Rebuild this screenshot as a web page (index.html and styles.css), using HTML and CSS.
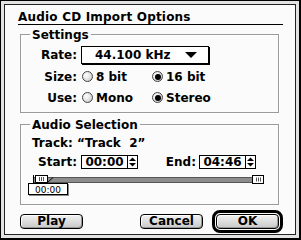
FILE: index.html
```html
<!DOCTYPE html>
<html lang="en">
<head>
    <meta charset="UTF-8">
    <title>Audio CD Import Options</title>
    <link rel="stylesheet" href="styles.css">
</head>
<body>
    <div class="window">
        <div class="panel">
            <h1 class="title">Audio CD Import Options</h1>

            <div class="group settings">
                <div class="group-title">Settings</div>
                <div class="form">
                    <span class="label">Rate:</span>
                    <div class="popup">
                        <span>44.100 kHz</span>
                        <span class="arrow"></span>
                    </div>

                    <span class="label">Size:</span>
                    <div class="options">
                        <span class="radio"><span class="dot"></span>8 bit</span>
                        <span class="radio on"><span class="dot"></span>16 bit</span>
                    </div>

                    <span class="label">Use:</span>
                    <div class="options">
                        <span class="radio"><span class="dot"></span>Mono</span>
                        <span class="radio on"><span class="dot"></span>Stereo</span>
                    </div>
                </div>
            </div>

            <div class="group selection">
                <div class="group-title">Audio Selection</div>
                <div class="track">Track: “Track&nbsp; 2”</div>
                <div class="times">
                    <span class="label start-label">Start:</span>
                    <span class="field">00:00</span>
                    <span class="stepper">
                        <svg width="9" height="12" viewBox="0 0 9 12">
                            <path d="M1 5 L4.5 1.5 L8 5 Z" fill="#000"/>
                            <path d="M1 7 L4.5 10.5 L8 7 Z" fill="#000"/>
                        </svg>
                    </span>
                    <span class="label end-label">End:</span>
                    <span class="field">04:46</span>
                    <span class="stepper">
                        <svg width="9" height="12" viewBox="0 0 9 12">
                            <path d="M1 5 L4.5 1.5 L8 5 Z" fill="#000"/>
                            <path d="M1 7 L4.5 10.5 L8 7 Z" fill="#000"/>
                        </svg>
                    </span>
                </div>
                <div class="slider">
                    <svg width="240" height="21" viewBox="0 0 240 21">
                        <rect x="6.5" y="2.5" width="225" height="5" fill="#8c8c8c" stroke="#555"/>
                        <line x1="6.5" y1="0" x2="6.5" y2="8" stroke="#000"/>
                        <path d="M20.5 7.5 L26 2.5" stroke="#000" fill="none"/>
                        <rect x="8.5" y="0.5" width="12" height="7" fill="#fff" stroke="#000"/>
                        <path d="M12.5 2 V6 M14.5 2 V6 M16.5 2 V6" stroke="#555"/>
                        <rect x="2" y="9" width="40" height="12" fill="#888"/>
                        <rect x="1.5" y="8.5" width="39" height="11" fill="#fff" stroke="#000"/>
                        <text x="21" y="17.5" text-anchor="middle" class="tip">00:00</text>
                        <rect x="225.5" y="0.5" width="11" height="8" fill="#fff" stroke="#000"/>
                        <path d="M229.5 2.5 V6.5 M231.5 2.5 V6.5 M233.5 2.5 V6.5" stroke="#555"/>
                    </svg>
                </div>
            </div>

            <div class="buttons">
                <button class="btn play">Play</button>
                <button class="btn cancel">Cancel</button>
                <span class="default-ring"><button class="btn">OK</button></span>
            </div>
        </div>
    </div>
</body>
</html>
```

FILE: styles.css
```css
body{
    margin: 0;
    font-family: "DejaVu Sans", sans-serif;
    font-weight: bold;
    font-size: 12px;
    color: #000;
}
.window{
    width: 301px;
    height: 240px;
    box-sizing: border-box;
    border: 1px solid #000;
    border-right-width: 2px;
    border-bottom-width: 2px;
    padding: 3px;
    background: #e2e2e2;
}
.panel{
    height: 100%;
    box-sizing: border-box;
    border: 1px solid #222;
    background: #fbfbfb;
}
.title{
    margin: 6px 0 0 13px;
    width: 265px;
    font-size: 12px;
    line-height: 13px;
    letter-spacing: 0.2px;
    border-bottom: 1px solid #000;
}

/* group boxes */
.group{
    margin-left: 15px;
    width: 257px;
    border: 1px solid #9a9a9a;
    box-shadow: 1px 1px 0 #fff, inset 1px 1px 0 #fff;
}
.settings{
    margin-top: 9px;
    padding-bottom: 4px;
}
.selection{
    margin-top: 11px;
    padding-bottom: 8px;
}
.group-title{
    width: fit-content;
    margin: -7px 0 0 9px;
    padding: 0 2px;
    line-height: 14px;
    background: #fbfbfb;
}
.form{
    display: grid;
    grid-template-columns: 56px 1fr;
    grid-template-rows: 22px 21px 21px;
    column-gap: 4px;
    align-items: center;
    margin-top: 2px;
}
.label{
    text-align: right;
}
.popup{
    height: 16px;
    border: 1px solid #000;
    box-shadow: 1px 1px 0 #000;
    background: #fff;
    display: flex;
    align-items: center;
    justify-content: space-between;
    padding: 0 11px 0 13px;
    box-sizing: content-box;
    width: 102px;
}
.arrow{
    width: 0;
    height: 0;
    border-left: 6px solid transparent;
    border-right: 6px solid transparent;
    border-top: 6px solid #000;
}
.options{
    display: grid;
    grid-template-columns: 70px auto;
    margin-left: 1px;
}
.radio{
    display: flex;
    align-items: center;
    gap: 3px;
}
.dot{
    width: 9px;
    height: 9px;
    border: 1px solid #444;
    border-radius: 50%;
    background: radial-gradient(circle at 35% 35%, #fff 0, #ddd 60%, #aaa 100%);
    display: flex;
    align-items: center;
    justify-content: center;
}
.on .dot::after{
    content: "";
    width: 6px;
    height: 6px;
    border-radius: 50%;
    background: #000;
}

/* audio selection */
.track{
    margin: 4px 0 0 11px;
    line-height: 14px;
}
.times{
    display: flex;
    align-items: center;
    margin-top: 5px;
    height: 14px;
}
.start-label{
    width: 56px;
    margin-right: 4px;
}
.end-label{
    width: 58px;
    margin-right: 3px;
}
.field{
    width: 45px;
    height: 12px;
    line-height: 12px;
    border: 1px solid #000;
    background: #fff;
    text-align: center;
}
.stepper{
    width: 9px;
    height: 12px;
    border: 1px solid #000;
    border-left: none;
    background: #fff;
    display: block;
}
.stepper svg{
    display: block;
}
.slider{
    margin: 6px 0 0 6px;
    height: 21px;
}
.slider svg{
    display: block;
}
.tip{
    font-family: "DejaVu Sans", sans-serif;
    font-weight: normal;
    font-size: 9px;
}

/* buttons */
.buttons{
    display: flex;
    align-items: center;
    height: 22px;
    margin-top: 5px;
}
.btn{
    width: 63px;
    height: 15px;
    padding: 0;
    font: inherit;
    line-height: 13px;
    border: 1px solid #000;
    border-radius: 4px;
    background: linear-gradient(#f2f2f2, #c8c8c8);
    box-shadow: inset 1px 1px 0 #fff, inset -1px -1px 0 #999;
    color: #000;
}
.play{
    margin-left: 15px;
}
.cancel{
    margin-left: 57px;
}
.default-ring{
    margin-left: 9px;
    padding: 1px;
    border: 3px solid #000;
    border-radius: 8px;
    display: flex;
}
```
